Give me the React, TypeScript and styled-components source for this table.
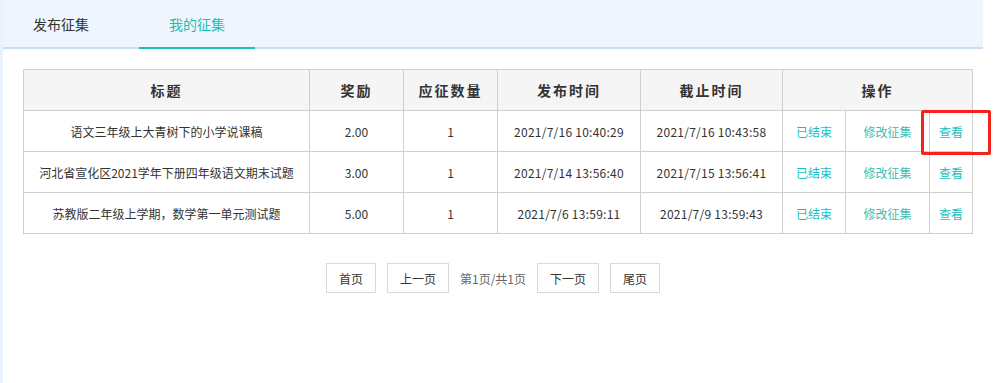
import React from 'react'
import styled, { createGlobalStyle } from 'styled-components'

const GlobalStyle = createGlobalStyle`
  html, body {
    margin: 0;
    padding: 0;
    background: #fff;
  }
  body {
    font-family: "Noto Sans CJK SC", "Liberation Sans", sans-serif;
    font-size: 12px;
    color: #333;
  }
`

const Page = styled.div`
  position: relative;
  width: 980px;
  min-height: 383px;
  border-left: 3px solid #e9f3fd;
`

const TabBar = styled.div`
  display: flex;
  gap: 20px;
  height: 47px;
  background: #eef5fc;
  border-bottom: 2px solid #c9ddf3;
`

const Tab = styled.div<{ $active?: boolean }>`
  width: 116px;
  display: flex;
  align-items: center;
  justify-content: center;
  font-size: 14px;
  color: ${(p) => (p.$active ? '#1dbfb2' : '#333')};
  border-bottom: 2px solid ${(p) => (p.$active ? '#1dbfb2' : 'transparent')};
  margin-bottom: -2px;
  cursor: pointer;
`

const Content = styled.div`
  padding: 20px 0 0 20px;
`

const Table = styled.table`
  width: 949px;
  border-collapse: collapse;
  table-layout: fixed;

  th,
  td {
    border: 1px solid #cfcfcf;
    text-align: center;
    height: 40px;
    padding: 0;
  }

  th {
    background: #f5f5f5;
    font-size: 14px;
    font-weight: bold;
    letter-spacing: 2px;
    color: #333;
  }

  td {
    font-size: 12px;
    color: #333;
  }
`

const Time = styled.span`
  letter-spacing: 0.25px;
`

const OpLink = styled.a<{ $tone?: 'muted' }>`
  color: ${(p) => (p.$tone === 'muted' ? '#3fbcad' : '#19bfbe')};
  text-decoration: none;
  cursor: pointer;
`

const Pager = styled.div`
  display: flex;
  justify-content: center;
  align-items: center;
  gap: 11px;
  margin-top: 29px;
  padding-right: 20px;
`

const PageButton = styled.button`
  height: 30px;
  padding: 0 12px;
  border: 1px solid #d9d9d9;
  background: #fff;
  font-family: inherit;
  font-size: 12px;
  color: #333;
  cursor: pointer;
`

const PageInfo = styled.span`
  font-size: 12px;
  color: #666;
`

const Highlight = styled.div`
  position: absolute;
  left: 918px;
  top: 110px;
  width: 64px;
  height: 39px;
  border: 3px solid #f5221b;
  border-radius: 2px;
  pointer-events: none;
`

type Collect = {
  title: string
  reward: string
  count: number
  published: string
  deadline: string
}

const rows: Collect[] = [
  { title: '语文三年级上大青树下的小学说课稿', reward: '2.00', count: 1, published: '2021/7/16 10:40:29', deadline: '2021/7/16 10:43:58' },
  { title: '河北省宣化区2021学年下册四年级语文期末试题', reward: '3.00', count: 1, published: '2021/7/14 13:56:40', deadline: '2021/7/15 13:56:41' },
  { title: '苏教版二年级上学期，数学第一单元测试题', reward: '5.00', count: 1, published: '2021/7/6 13:59:11', deadline: '2021/7/9 13:59:43' },
]

export default function App() {
  return (
    <>
      <GlobalStyle />
      <Page>
        <TabBar>
          <Tab>发布征集</Tab>
          <Tab $active>我的征集</Tab>
        </TabBar>
        <Content>
          <Table>
            <colgroup>
              <col style={{ width: 286 }} />
              <col style={{ width: 94 }} />
              <col style={{ width: 94 }} />
              <col style={{ width: 143 }} />
              <col style={{ width: 142 }} />
              <col style={{ width: 63 }} />
              <col style={{ width: 84 }} />
              <col style={{ width: 43 }} />
            </colgroup>
            <thead>
              <tr>
                <th>标题</th>
                <th>奖励</th>
                <th>应征数量</th>
                <th>发布时间</th>
                <th>截止时间</th>
                <th colSpan={3}>操作</th>
              </tr>
            </thead>
            <tbody>
              {rows.map((r) => (
                <tr key={r.title}>
                  <td>{r.title}</td>
                  <td>{r.reward}</td>
                  <td>{r.count}</td>
                  <td>
                    <Time>{r.published}</Time>
                  </td>
                  <td>
                    <Time>{r.deadline}</Time>
                  </td>
                  <td>
                    <OpLink>已结束</OpLink>
                  </td>
                  <td>
                    <OpLink $tone='muted'>修改征集</OpLink>
                  </td>
                  <td>
                    <OpLink>查看</OpLink>
                  </td>
                </tr>
              ))}
            </tbody>
          </Table>
          <Pager>
            <PageButton>首页</PageButton>
            <PageButton>上一页</PageButton>
            <PageInfo>第1页/共1页</PageInfo>
            <PageButton>下一页</PageButton>
            <PageButton>尾页</PageButton>
          </Pager>
        </Content>
        <Highlight />
      </Page>
    </>
  )
}
